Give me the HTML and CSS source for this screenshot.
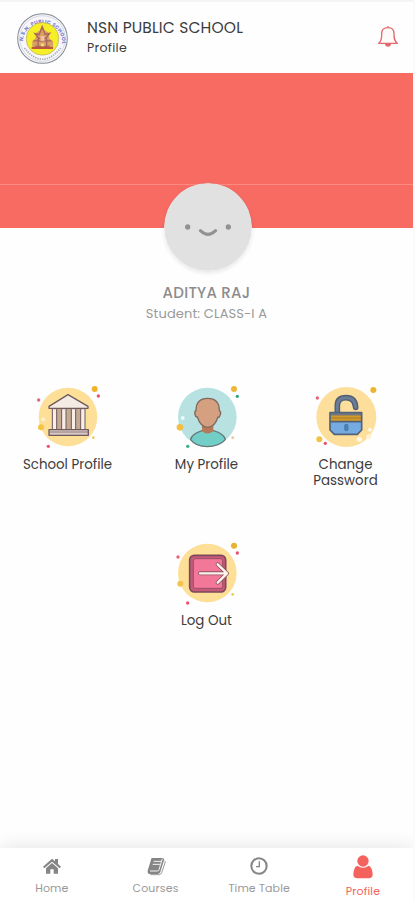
FILE: index.html
```html
<!DOCTYPE html>
<html lang="en">
<head>
<meta charset="utf-8">
<title>NSN Public School - Profile</title>
<link rel="stylesheet" href="styles.css">
</head>
<body>
<div class="app">
  <header class="header">
    <svg class="logo" viewBox="0 0 150 150">
      <defs><path id="ring" d="M17 88A58 58 0 1 1 133 88"/></defs>
      <circle cx="75" cy="75" r="73" fill="#f7f7fb" stroke="#858b94" stroke-width="3"/>
      <circle cx="75" cy="75" r="67" fill="none" stroke="#c6cad6" stroke-width="2"/>
      <text class="logo-text"><textPath href="#ring" startOffset="5" textLength="180">N.S.N. PUBLIC SCHOOL</textPath></text>
      <path d="M22 103Q75 169 128 103" fill="none" stroke="#a9adb5" stroke-width="5" stroke-dasharray="4 3"/>
      <circle cx="75" cy="76" r="48" fill="#f6ee27" stroke="#b2a96c" stroke-width="2"/>
      <path d="M45 105V82l9-7 3-18 11-6 6-17 7 17 12 6 2 18 11 8v22z" fill="#d7a064"/>
      <path d="M53 61l12 3 9-23 9 22 13-3-12 15H65zM49 82h52M53 98h43M62 75v28M87 75v28" fill="none" stroke="#a9655a" stroke-width="4"/>
      <path d="M69 68h12v14H69z" fill="#f1c4a0"/>
      <path d="M43 103h63" stroke="#b74a36" stroke-width="5"/>
      <path d="M70 90h10v8H70z" fill="#f2dd76"/>
    </svg>
    <div class="titles">
      <h1>NSN PUBLIC SCHOOL</h1>
      <p>Profile</p>
    </div>
    <svg class="bell" viewBox="0 0 66 72">
      <path d="M5 55C15 47 14 38 14 26C14 15 21 8 33 8S51 15 51 26C51 38 51 47 61 55Z" fill="#fffafa" stroke="#e2696c" stroke-width="4" stroke-linejoin="round"/>
      <path d="M30 7q3-6 6 0" fill="none" stroke="#e2696c" stroke-width="3"/>
      <path d="M24 57h18q-1 8-9 8t-9-8z" fill="#e2696c"/>
    </svg>
  </header>

  <section class="banner"><div class="banner-line"></div></section>

  <section class="identity">
    <svg class="avatar" viewBox="0 0 264 264">
      <circle cx="132" cy="132" r="132" fill="#e1e1e1"/>
      <circle cx="71" cy="132" r="8" fill="#929292"/>
      <circle cx="193" cy="132" r="8" fill="#929292"/>
      <path d="M109 143Q132 165 155 143" fill="none" stroke="#929292" stroke-width="9" stroke-linecap="round"/>
    </svg>
    <h2>ADITYA RAJ</h2>
    <p>Student: CLASS-I A</p>
  </section>

  <main class="menu">
    <a class="tile">
      <svg viewBox="54 27 210 198">
        <circle cx="159" cy="126" r="88" fill="#fddf98"/>
        <circle cx="239" cy="42" r="9" fill="#eeb52c"/><circle cx="250" cy="63" r="5" fill="#e9526d"/>
        <circle cx="71" cy="75" r="5" fill="#e9617a"/><circle cx="78" cy="157" r="9" fill="#f7c442"/>
        <circle cx="100" cy="214" r="5" fill="#e9526d"/><circle cx="235" cy="188" r="4" fill="#f3c650"/>
        <circle cx="85" cy="133" r="6" fill="#fff1cd"/>
        <g stroke="#6f5a5b" stroke-width="4" stroke-linejoin="round">
          <path d="M112 100h98v66h-98z" fill="#c4aa92" stroke="none"/>
          <path d="M102 100v-6l57-35 60 35v6z" fill="#f5ebe5"/>
          <path d="M112 101h13v63h-13zM140 101h13v63h-13zM169 101h13v63h-13zM197 101h13v63h-13z" fill="#f7eee8" stroke-width="3"/>
          <path d="M102 164h118v17H102z" fill="#d8c8c5"/>
          <path d="M103 171h116" fill="none" stroke-width="2"/>
        </g>
      </svg>
      <span>School Profile</span>
    </a>
    <a class="tile">
      <svg viewBox="51 27 210 198">
        <circle cx="157" cy="126" r="88" fill="#b8e2e2"/>
        <circle cx="237" cy="42" r="9" fill="#f0b536"/><circle cx="247" cy="64" r="5" fill="#2ea57e"/>
        <circle cx="75" cy="157" r="10" fill="#f3be43"/><circle cx="98" cy="214" r="5" fill="#35ae83"/>
        <circle cx="233" cy="188" r="4" fill="#f0c392"/><circle cx="83" cy="129" r="6" fill="#edfafa"/>
        <g stroke="#66777a" stroke-width="4" stroke-linejoin="round">
          <path d="M107 194q3-17 34-27h34q32 9 36 27-19 21-54 21t-50-21z" fill="#72cfc8"/>
          <path d="M141 148v20q16 15 34 0v-20z" fill="#b77959" stroke="none"/>
          <path d="M123 107q0-37 35-37t35 37q6 2 3 12t-7 7q-10 31-31 31t-31-31q-5 1-7-8t3-11z" fill="#d5a080" stroke="#80695f"/>
        </g>
      </svg>
      <span>My Profile</span>
    </a>
    <a class="tile">
      <svg viewBox="48 27 210 198">
        <circle cx="154" cy="126" r="90" fill="#fddf9b"/>
        <circle cx="235" cy="45" r="9" fill="#eeb52c"/><circle cx="67" cy="69" r="5" fill="#e9617a"/>
        <circle cx="73" cy="193" r="9" fill="#f3c240"/><circle cx="91" cy="205" r="5" fill="#e9526d"/>
        <circle cx="193" cy="193" r="8" fill="#fff8e7"/><circle cx="225" cy="164" r="6" fill="#fff8e7"/><circle cx="221" cy="185" r="8" fill="#fff3d2"/>
        <path d="M127 113V92q0-24 26-24 27 0 29 29" fill="none" stroke="#4f5d75" stroke-width="17" stroke-linecap="round"/>
        <path d="M127 113V92q0-24 26-24 27 0 29 29" fill="none" stroke="#6a7c96" stroke-width="9" stroke-linecap="round"/>
        <path d="M105 113h95v52l-13 13h-69l-13-13z" fill="#76abe1"/>
        <path d="M107 120h91v19h-91z" fill="#d69b26"/>
        <path d="M107 118h91" stroke="#72777d" stroke-width="7"/>
        <path d="M107 129h91" stroke="#9d7a38" stroke-width="3"/>
        <path d="M105 113h95v52l-13 13h-69l-13-13zM106 140h93" fill="none" stroke="#53627a" stroke-width="5" stroke-linejoin="round"/>
        <rect x="149" y="148" width="10" height="19" rx="4" fill="#4b83bd" stroke="#47698e" stroke-width="2"/>
      </svg>
      <span>Change<br>Password</span>
    </a>
    <a class="tile logout">
      <svg viewBox="51 28 210 198">
        <circle cx="157" cy="127" r="88" fill="#fddf98"/>
        <circle cx="237" cy="45" r="9" fill="#eab12a"/><circle cx="247" cy="67" r="5" fill="#e9526d"/>
        <circle cx="69" cy="79" r="5" fill="#e9617a"/><circle cx="76" cy="159" r="9" fill="#f3c34b"/>
        <circle cx="98" cy="217" r="5" fill="#e9526d"/><circle cx="233" cy="191" r="4" fill="#f3c650"/>
        <rect x="104" y="74" width="108" height="110" rx="14" fill="#c55a7b" stroke="#7d4859" stroke-width="5"/>
        <rect x="115" y="84" width="88" height="89" rx="6" fill="#f37799" stroke="#984f66" stroke-width="3"/>
        <path d="M135 128h78M188 101l28 27-28 28" fill="none" stroke="#8c5661" stroke-width="12" stroke-linecap="round" stroke-linejoin="round"/>
        <path d="M135 128h78M188 101l28 27-28 28" fill="none" stroke="#fff4eb" stroke-width="7" stroke-linecap="round" stroke-linejoin="round"/>
      </svg>
      <span>Log Out</span>
    </a>
  </main>

  <nav class="nav">
    <a class="nav-item">
      <svg viewBox="0 0 60 60"><path d="M3 32 30 8l9 8v-7h9v15l9 8-4 5-23-20L7 37zM12 37l18-16 18 16v16H35V40H25v13H12z" fill="#858585"/></svg>
      <span>Home</span>
    </a>
    <a class="nav-item">
      <svg viewBox="0 0 60 60"><path d="M18 6h32q6 1 4 7L43 48q-2 6-8 6H11q-8-2-6-10L15 11q0-4 3-5z" fill="#858585"/><path d="M23 16h22M20 25h22M12 45h23q3 0 4-4l10-33" fill="none" stroke="#f5f5f5" stroke-width="3"/><path d="M55 14q4 2 2 7L47 50q-2 5-7 6H13" fill="none" stroke="#999" stroke-width="3"/></svg>
      <span>Courses</span>
    </a>
    <a class="nav-item">
      <svg viewBox="0 0 60 60"><circle cx="30" cy="30" r="23" fill="none" stroke="#858585" stroke-width="6"/><path d="M31 16v16H21" fill="none" stroke="#858585" stroke-width="4"/></svg>
      <span>Time Table</span>
    </a>
    <a class="nav-item active">
      <svg viewBox="0 0 60 72"><circle cx="30" cy="18" r="17" fill="#f4625d"/><path d="M13 32q17 12 34 0 11 4 12 26 0 12-12 12H13Q1 70 1 58 2 36 13 32z" fill="#f4625d"/></svg>
      <span>Profile</span>
    </a>
  </nav>
</div>
</body>
</html>
```
FILE: styles.css
```css
* { box-sizing: border-box; }

body {
  margin: 0;
  background: #fefefe;
  font-family: Poppins, Inter, "Noto Sans", sans-serif;
  color: #3c3c3c;
}

h1, h2, p { margin: 0; font-weight: 400; white-space: nowrap; }

.app {
  display: flex;
  flex-direction: column;
  height: 900px;
  width: 415px;
  border-right: 2px solid #fafafa;
  overflow: hidden;
}

.header {
  display: flex;
  align-items: flex-start;
  height: 73px;
  flex: none;
  padding: 11px 14px 0 17px;
  border-top: 2px solid #f4f4f4;
}

.logo { width: 51px; height: 51px; }
.logo-text { font-size: 15px; font-weight: 700; fill: #777bd0; }

.titles { margin-left: 19px; padding-top: 5px; flex: 1; }
.titles h1 { font-size: 15.5px; line-height: 20px; letter-spacing: 0.15px; }
.titles p { font-size: 12.5px; line-height: 17px; letter-spacing: 0.3px; margin-top: 1px; }

.bell { width: 22px; height: 24px; margin-top: 12px; }

.banner { height: 155px; flex: none; background: #f76b63; padding-top: 111px; }
.banner-line { height: 1px; background: #fb8a80; }

.identity {
  display: flex;
  flex-direction: column;
  align-items: center;
  margin-top: -45px;
  flex: none;
  position: relative;
}
.avatar {
  width: 88px;
  height: 88px;
  border-radius: 50%;
  box-shadow: 0 2px 4px #00000018;
  margin-left: 2px;
}
.identity h2 {
  margin-top: 12px;
  font-size: 15px;
  letter-spacing: 0.25px;
  line-height: 20px;
  font-weight: 500;
  color: #8c8c8c;
}
.identity p { font-size: 13px; letter-spacing: 0.12px; line-height: 20px; color: #999; margin-top: 1px; }

.menu {
  display: grid;
  grid-template-columns: repeat(3, 139px);
  grid-template-rows: 156px 110px;
  margin: 60px 0 0 -2px;
}
.tile { display: flex; flex-direction: column; align-items: center; text-align: center; }
.tile svg { width: 70px; height: 66px; }
.tile span { margin-top: 7px; font-size: 13.4px; line-height: 16px; }
.logout { grid-column: 2; }

.nav {
  display: grid;
  grid-template-columns: repeat(4, 103.7px);
  height: 52px;
  flex: none;
  margin-top: auto;
  padding-top: 8px;
  background: #fff;
  box-shadow: 0 -2px 18px #00000018;
}
.nav-item {
  display: flex;
  flex-direction: column;
  align-items: center;
  font-size: 11px;
  letter-spacing: 0.15px;
  line-height: 14px;
  color: #999;
}
.nav-item svg { width: 20px; height: 20px; }
.nav-item span { margin-top: 5px; white-space: nowrap; }
.nav-item.active { color: #f4625d; }
.nav-item.active svg { height: 24px; margin-top: -1px; }
.nav-item.active span { margin-top: 5px; }
```
